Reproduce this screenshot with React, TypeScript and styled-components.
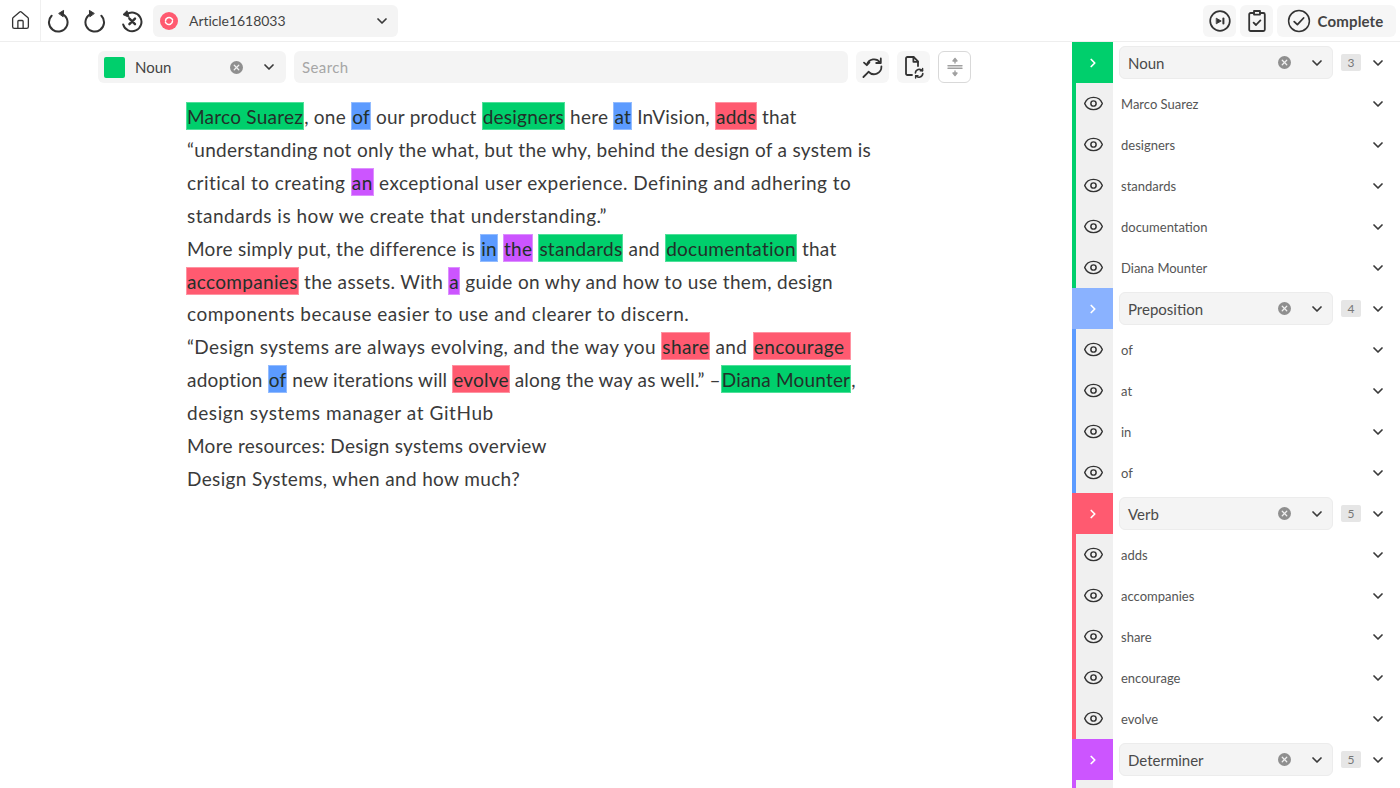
import React from 'react';
import styled, { createGlobalStyle } from 'styled-components';
import { ChevronDown, ChevronRight, Eye, Home, X } from 'lucide-react';

const GREEN = '#00cf6c';
const BLUE = '#5c9bff';
const RED = '#ff5a70';
const PURPLE = '#cc55ff';

type Kind = 'n' | 'p' | 'v' | 'd';

const kindColor: Record<Kind, string> = { n: GREEN, p: BLUE, v: RED, d: PURPLE };
const kindEdge: Record<Kind, string> = { n: '#4fe09a', p: '#93bcff', v: '#ff93a2', d: '#dd8fff' };

const GlobalStyle = createGlobalStyle`
  html, body {
    margin: 0;
    padding: 0;
    height: 788px;
    overflow: hidden;
    background: #ffffff;
    font-family: 'Lato', 'Liberation Sans', sans-serif;
    color: #333333;
  }
`;

const Page = styled.div`
  width: 1400px;
  height: 788px;
  display: flex;
  flex-direction: column;
  overflow: hidden;
`;

const TopBar = styled.header`
  height: 42px;
  box-sizing: border-box;
  flex-shrink: 0;
  display: flex;
  align-items: stretch;
  border-bottom: 1px solid #eeeeee;
`;

const HomeCell = styled.div`
  width: 41px;
  box-sizing: border-box;
  display: flex;
  align-items: center;
  justify-content: center;
  border-right: 1px solid #f0f0f0;
`;

const HistoryGroup = styled.div`
  display: flex;
  align-items: center;
  width: 114px;
  margin-left: -2px;
`;

const HistoryIcon = styled.div`
  width: 37px;
  display: flex;
  justify-content: center;
`;

const ArticleSelect = styled.div`
  align-self: center;
  width: 245px;
  height: 32px;
  box-sizing: border-box;
  padding: 0 8px 0 7px;
  display: flex;
  align-items: center;
  background: #f4f4f4;
  border-radius: 6px;
  font-size: 14px;
  letter-spacing: -0.05px;
  color: #444444;
`;

const StatusDot = styled.span`
  width: 18px;
  height: 18px;
  border-radius: 50%;
  background: ${RED};
  display: flex;
  align-items: center;
  justify-content: center;
  margin-right: 11px;
`;

const Grow = styled.span`
  flex: 1;
`;

const TopActions = styled.div`
  margin-left: auto;
  padding-right: 4px;
  display: flex;
  align-items: center;
  gap: 4px;
`;

const ActionButton = styled.div`
  height: 32px;
  min-width: 33px;
  box-sizing: border-box;
  display: flex;
  align-items: center;
  justify-content: center;
  gap: 7px;
  border-radius: 6px;
  background: #f6f6f6;
`;

const CompleteButton = styled(ActionButton)`
  width: 119px;
  padding-right: 3px;
  font-size: 15px;
  font-weight: 700;
  letter-spacing: 0.15px;
  color: #444444;
`;

const Body = styled.div`
  flex: 1;
  display: flex;
  min-height: 0;
`;

const Main = styled.main`
  width: 1072px;
  flex-shrink: 0;
  box-sizing: border-box;
  padding: 9px 0 0 98px;
`;

const FilterRow = styled.div`
  display: flex;
  align-items: center;
  gap: 8px;
  height: 32px;
`;

const LabelSelect = styled.div`
  width: 188px;
  height: 32px;
  box-sizing: border-box;
  padding: 0 9px 0 6px;
  display: flex;
  align-items: center;
  border-radius: 6px;
  background: #f4f4f4;
  font-size: 15px;
  color: #444444;
`;

const Swatch = styled.span`
  width: 21px;
  height: 21px;
  border-radius: 2px;
  background: ${GREEN};
  margin-right: 10px;
`;

const ClearDot = styled.span<{ $right: number }>`
  width: 13px;
  height: 13px;
  border-radius: 50%;
  background: #8f8f8f;
  display: flex;
  align-items: center;
  justify-content: center;
  margin-right: ${(p) => p.$right}px;
`;

const SearchBox = styled.div`
  width: 554px;
  height: 32px;
  box-sizing: border-box;
  padding-left: 8px;
  display: flex;
  align-items: center;
  border-radius: 6px;
  background: #f4f4f4;
  font-size: 15px;
  letter-spacing: 0.4px;
  color: #a6a6a6;
`;

const ToolButton = styled.div`
  width: 33px;
  height: 32px;
  display: flex;
  align-items: center;
  justify-content: center;
  border-radius: 6px;
  background: #f6f6f6;
`;

const OutlineButton = styled(ToolButton)`
  box-sizing: border-box;
  background: #ffffff;
  border: 1px solid #d9d9d9;
`;

const Article = styled.article`
  margin: 18px 0 0 89px;
  font-size: 19px;
  line-height: 32.9px;
  color: #3a3a3a;
`;

const Line = styled.div<{ $track: number }>`
  white-space: pre;
  letter-spacing: ${(p) => p.$track}px;
`;

const Mark = styled.span<{ $kind: Kind; $lead?: boolean }>`
  background: ${(p) => kindColor[p.$kind]};
  box-shadow: inset 0 0 0 1px ${(p) => kindEdge[p.$kind]};
  padding: 3px 1px 2px;
  margin-left: ${(p) => (p.$lead ? '-1px' : '0')};
  color: #22302a;
`;

const Side = styled.aside`
  width: 328px;
  flex-shrink: 0;
  overflow: hidden;
`;

const GroupHead = styled.div`
  height: 41px;
  display: flex;
  align-items: center;
`;

const Toggle = styled.div<{ $kind: Kind; $light?: boolean }>`
  width: 41px;
  height: 41px;
  flex-shrink: 0;
  display: flex;
  align-items: center;
  justify-content: center;
  background: ${(p) => (p.$light ? '#8ab2ff' : kindColor[p.$kind])};
`;

const GroupSelect = styled.div`
  width: 214px;
  height: 33px;
  margin-left: 6px;
  box-sizing: border-box;
  padding: 0 7px 0 8px;
  display: flex;
  align-items: center;
  border: 1px solid #ececec;
  border-radius: 6px;
  background: #f4f4f4;
  font-size: 15px;
  color: #4a4a4a;
`;

const CountBadge = styled.span`
  width: 20px;
  height: 17px;
  margin-left: 8px;
  display: flex;
  align-items: center;
  justify-content: center;
  background: #e6e6e6;
  border-radius: 2px;
  font-size: 12px;
  color: #777777;
`;

const RowChevron = styled.span`
  margin-left: auto;
  padding-right: 14px;
  display: flex;
`;

const ItemRow = styled.div<{ $kind: Kind }>`
  height: 41px;
  display: flex;
  align-items: center;
  border-left: 4px solid ${(p) => kindColor[p.$kind]};
`;

const EyeCell = styled.div`
  width: 37px;
  height: 41px;
  box-sizing: border-box;
  padding-right: 3px;
  flex-shrink: 0;
  display: flex;
  align-items: center;
  justify-content: center;
  background: #f0f0f0;
`;

const ItemText = styled.span`
  margin-left: 8px;
  font-size: 13px;
  color: #555555;
`;

const Stroke = ({ size = 24, width = 1.7, color = '#333333', children }: { size?: number; width?: number; color?: string; children: React.ReactNode }) => (
  <svg width={size} height={size} viewBox="0 0 24 24" fill="none" stroke={color} strokeWidth={width} strokeLinecap="round" strokeLinejoin="round">
    {children}
  </svg>
);

const MirrorBox = styled.span<{ $flip?: boolean }>`
  display: flex;
  transform: ${(p) => (p.$flip ? 'scaleX(-1)' : 'none')};
`;

const UndoIcon = ({ flip }: { flip?: boolean }) => (
  <MirrorBox $flip={flip}>
    <Stroke>
      <path d="M5.6 6.8A9.3 9.3 0 1 0 15 4.4" strokeWidth={2} />
      <path d="M13 4.3L17.6 1.4L17.2 7.4z" fill="#333333" strokeWidth={1} />
    </Stroke>
  </MirrorBox>
);

const HistoryClearIcon = () => (
  <Stroke>
    <path d="M6.4 5.6A9.3 9.3 0 1 1 3.2 15.4" strokeWidth={2} />
    <path d="M6.8 2L3 5.6L8.8 8.2z" fill="#333333" strokeWidth={1} />
    <path d="M9.4 9.6l5.6 5.6M15 9.6l-5.6 5.6" strokeWidth={2.4} />
  </Stroke>
);

const StatusIcon = () => (
  <svg width="12" height="12" viewBox="0 0 24 24" fill="none" stroke="#ffffff" strokeWidth={3} strokeLinecap="round">
    <path d="M5 12a7 7 0 0 1 12-5l2 2M19 12a7 7 0 0 1-12 5l-2-2" />
  </svg>
);

const SkipIcon = () => (
  <Stroke>
    <circle cx="12" cy="12" r="9.8" />
    <path d="M8.6 9.4l4.6 2.6-4.6 2.6z" fill="#333333" strokeWidth={0.9} />
    <path d="M15.4 9.4v5.2" strokeWidth={2} />
  </Stroke>
);

const ChecklistIcon = () => (
  <Stroke width={1.8}>
    <path d="M9 4H5.6A1.4 1.4 0 0 0 4.2 5.4v15.2A1.4 1.4 0 0 0 5.6 22h12.8a1.4 1.4 0 0 0 1.4-1.4V5.4A1.4 1.4 0 0 0 18.4 4H15" />
    <path d="M9 2h6v3.6H9z" />
    <path d="M8.6 13.6l2.4 2.4 4.4-4.6" />
  </Stroke>
);

const CircleCheckIcon = () => (
  <Stroke width={1.5}>
    <circle cx="12" cy="12" r="10.4" />
    <path d="M7.2 12.6l3.2 3 6.2-6.6" strokeWidth={1.8} />
  </Stroke>
);

const SearchSyncIcon = () => (
  <Stroke width={1.8}>
    <path d="M6 9.4A7.4 7.4 0 0 1 19 7.4" />
    <path d="M19.8 3.4v4.6h-4.6" />
    <path d="M20.4 11.4a7.4 7.4 0 0 1-12.8 5.4" />
    <path d="M3 7.6l2.8 2.6 2.6-2.8" />
    <path d="M7.6 16.8L2.4 22" />
  </Stroke>
);

const FileSyncIcon = () => (
  <Stroke width={1.8}>
    <path d="M10 20H5.4A1.4 1.4 0 0 1 4 18.6V3.4A1.4 1.4 0 0 1 5.4 2h6.2L16 6.4V11" />
    <path d="M11.4 2v4.8H16" />
    <path d="M13.4 18a4 4 0 0 1 7-2.4M20.8 18.6a4 4 0 0 1-7 2.2" strokeWidth={1.6} />
    <path d="M20.6 13.4v2.4h-2.4M13.6 23v-2.4H16" strokeWidth={1.4} />
  </Stroke>
);

const SplitIcon = () => (
  <Stroke color="#a0a0a0" width={1.4}>
    <path d="M5 10.8h14M5 13.2h14" />
    <path d="M12 5v3M12 19v-3" />
    <path d="M10 6l2-2.6 2 2.6zM10 18l2 2.6 2-2.6z" fill="#a0a0a0" />
  </Stroke>
);

const Chevron = ({ size = 16 }: { size?: number }) => <ChevronDown size={size} strokeWidth={2.6} color="#3a3a3a" />;

const Clear = ({ right = 0 }: { right?: number }) => (
  <ClearDot $right={right}>
    <X size={9} color="#f0f0f0" strokeWidth={3.4} />
  </ClearDot>
);

const groups: { kind: Kind; label: string; count: number; light?: boolean; items: string[] }[] = [
  { kind: 'n', label: 'Noun', count: 3, items: ['Marco Suarez', 'designers', 'standards', 'documentation', 'Diana Mounter'] },
  { kind: 'p', label: 'Preposition', count: 4, light: true, items: ['of', 'at', 'in', 'of'] },
  { kind: 'v', label: 'Verb', count: 5, items: ['adds', 'accompanies', 'share', 'encourage', 'evolve'] },
  { kind: 'd', label: 'Determiner', count: 5, items: [''] },
];

const App: React.FC = () => (
  <Page>
    <GlobalStyle />
    <TopBar>
      <HomeCell>
        <Home size={21} strokeWidth={1.5} color="#333333" />
      </HomeCell>
      <HistoryGroup>
        <HistoryIcon><UndoIcon /></HistoryIcon>
        <HistoryIcon><UndoIcon flip /></HistoryIcon>
        <HistoryIcon><HistoryClearIcon /></HistoryIcon>
      </HistoryGroup>
      <ArticleSelect>
        <StatusDot><StatusIcon /></StatusDot>
        Article1618033
        <Grow />
        <Chevron />
      </ArticleSelect>
      <TopActions>
        <ActionButton><SkipIcon /></ActionButton>
        <ActionButton><ChecklistIcon /></ActionButton>
        <CompleteButton><CircleCheckIcon />Complete</CompleteButton>
      </TopActions>
    </TopBar>
    <Body>
      <Main>
        <FilterRow>
          <LabelSelect>
            <Swatch />
            Noun
            <Grow />
            <Clear right={18} />
            <Chevron />
          </LabelSelect>
          <SearchBox>Search</SearchBox>
          <ToolButton><SearchSyncIcon /></ToolButton>
          <ToolButton><FileSyncIcon /></ToolButton>
          <OutlineButton><SplitIcon /></OutlineButton>
        </FilterRow>
        <Article>
          <Line $track={0.25}><Mark $kind="n" $lead>Marco Suarez</Mark>, one <Mark $kind="p">of</Mark> our product <Mark $kind="n">designers</Mark> here <Mark $kind="p">at</Mark> InVision, <Mark $kind="v">adds</Mark> that</Line>
          <Line $track={0.3}>“understanding not only the what, but the why, behind the design of a system is</Line>
          <Line $track={0.47}>critical to creating <Mark $kind="d">an</Mark> exceptional user experience. Defining and adhering to</Line>
          <Line $track={0.49}>standards is how we create that understanding.”</Line>
          <Line $track={0.27}>More simply put, the difference is <Mark $kind="p">in</Mark> <Mark $kind="d">the</Mark> <Mark $kind="n">standards</Mark> and <Mark $kind="n">documentation</Mark> that</Line>
          <Line $track={0.33}><Mark $kind="v" $lead>accompanies</Mark> the assets. With <Mark $kind="d">a</Mark> guide on why and how to use them, design</Line>
          <Line $track={0.51}>components because easier to use and clearer to discern.</Line>
          <Line $track={0.42}>“Design systems are always evolving, and the way you <Mark $kind="v">share</Mark> and <Mark $kind="v">encourage </Mark></Line>
          <Line $track={0.19}>adoption <Mark $kind="p">of</Mark> new iterations will <Mark $kind="v">evolve</Mark> along the way as well.” –<Mark $kind="n">Diana Mounter</Mark>,</Line>
          <Line $track={0.58}>design systems manager at GitHub</Line>
          <Line $track={0.27}>More resources: Design systems overview</Line>
          <Line $track={0.36}>Design Systems, when and how much?</Line>
        </Article>
      </Main>
      <Side>
        {groups.map((g) => (
          <React.Fragment key={g.label}>
            <GroupHead>
              <Toggle $kind={g.kind} $light={g.light}>
                <ChevronRight size={14} strokeWidth={3} color="#ffffff" />
              </Toggle>
              <GroupSelect>
                {g.label}
                <Grow />
                <Clear right={18} />
                <Chevron />
              </GroupSelect>
              <CountBadge>{g.count}</CountBadge>
              <RowChevron><Chevron /></RowChevron>
            </GroupHead>
            {g.items.map((item, i) => (
              <ItemRow key={i} $kind={g.kind}>
                <EyeCell>
                  <Eye size={21} strokeWidth={1.7} color="#333333" />
                </EyeCell>
                <ItemText>{item}</ItemText>
                {item && <RowChevron><Chevron /></RowChevron>}
              </ItemRow>
            ))}
          </React.Fragment>
        ))}
      </Side>
    </Body>
  </Page>
);

export default App;
